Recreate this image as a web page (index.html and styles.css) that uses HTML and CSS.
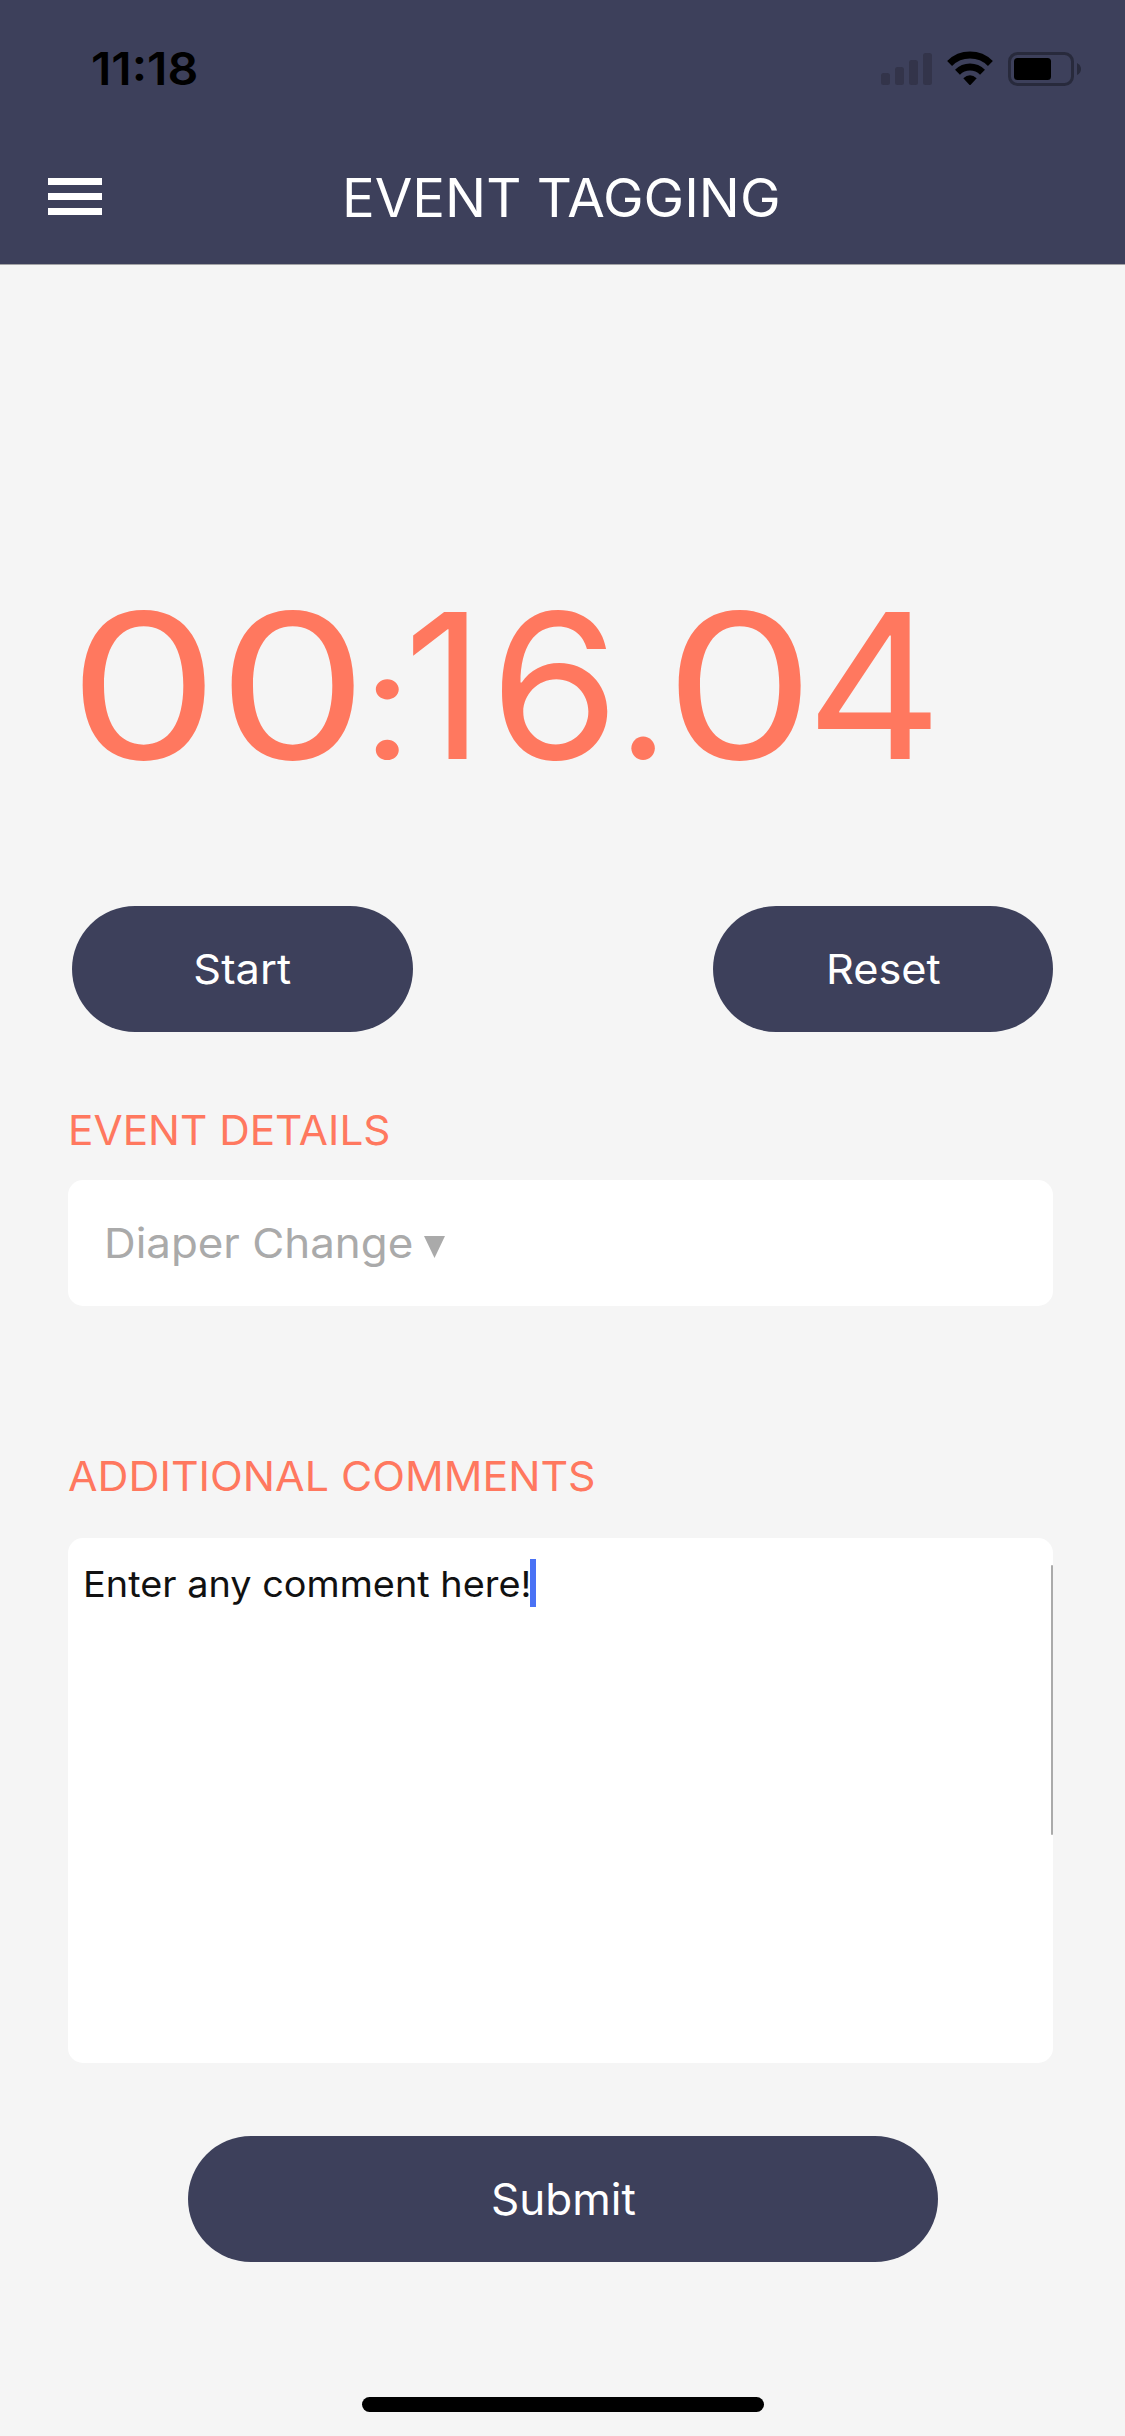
FILE: index.html
```html
<!DOCTYPE html>
<html lang="en">
<head>
<meta charset="utf-8">
<title>Event Tagging</title>
<link rel="stylesheet" href="styles.css">
</head>
<body>
<header class="header">
  <div class="status">
    <span class="clock">11:18</span>
    <svg class="status-icons" width="204" height="40" viewBox="0 0 204 40">
      <g fill="#33344a">
        <rect x="1" y="23" width="9" height="12" rx="2.5"/>
        <rect x="15" y="17" width="9" height="18" rx="2.5"/>
        <rect x="29" y="10" width="9" height="25" rx="2.5"/>
        <rect x="43" y="3" width="9" height="32" rx="2.5"/>
      </g>
      <g fill="none" stroke="#000" stroke-width="7">
        <path d="M69.600 13.500A29 29 0 0 1 110.400 13.500"/>
        <path d="M77.500 22.200A17.800 17.800 0 0 1 102.500 22.200"/>
      </g>
      <path d="M83.300 28.300Q90 22 96.700 28.300L90.700 34.700Q90 35.300 89.300 34.700Z"/>
      <rect x="129.500" y="3.500" width="63" height="31" rx="8" fill="none" stroke="#282a3c" stroke-width="3"/>
      <rect x="134" y="8" width="37" height="22" rx="3.500"/>
      <path d="M197 13Q201 15 201 19T197 25Z" fill="#282a3c"/>
    </svg>
  </div>
  <div class="navbar">
    <button class="menu" aria-label="Menu"><i></i><i></i><i></i></button>
    <h1 class="title">EVENT TAGGING</h1>
  </div>
</header>
<main class="content">
  <div class="timer"><span class="zero">0</span><span class="zero second">0</span><span class="colon">:</span><span class="one">1</span><span class="six">6</span><span class="dot">.</span><span class="zero last">0</span><span class="four">4</span></div>
  <div class="controls">
    <button class="pill"><span class="caption">Start</span></button>
    <button class="pill reset"><span class="caption">Reset</span></button>
  </div>
  <h2 class="label"><span class="details">EVENT DETAILS</span></h2>
  <div class="select">
    <span class="value">Diaper Change</span>
    <svg class="arrow" width="21" height="22" viewBox="0 0 21 22"><path d="M0 0H21L10.500 22Z" fill="#aaa"/></svg>
  </div>
  <h2 class="label label-comments"><span class="additional">ADDITIONAL COMMENTS</span></h2>
  <div class="comments">
    <span class="comment">Enter any comment here!</span><i class="caret"></i>
    <i class="scrollbar"></i>
  </div>
  <button class="pill submit">Submit</button>
  <div class="home"></div>
</main>
</body>
</html>
```
FILE: styles.css
```css
* { box-sizing: border-box; }
body {
  margin: 0;
  width: 1125px;
  height: 2436px;
  background: #f5f5f5;
  font-family: Inter, "Liberation Sans", sans-serif;
  overflow: hidden;
}
button { border: 0; padding: 0; background: none; font: inherit; color: inherit; }
h1, h2 { margin: 0; font-weight: 400; }
span { white-space: nowrap; display: inline-block; transform-origin: 0 50%; }

.header {
  height: 265px;
  background: #3d405b;
  border-bottom: 1px solid #a3a3a6;
}
.status {
  height: 132px;
  padding: 50px 41px 0 91px;
  display: flex;
  justify-content: space-between;
  align-items: flex-start;
}
.clock { font-size: 45px; line-height: 38px; font-weight: 600; transform: scaleX(1.07); }
.navbar {
  height: 132px;
  display: grid;
  grid-template-columns: 342px 1fr;
  align-items: center;
}
.menu {
  margin: 0 0 3px 48px;
  width: 54px;
  display: flex;
  flex-direction: column;
  gap: 8px;
}
.menu i { height: 7px; background: #fff; }
.title {
  color: #fff;
  font-size: 53px;
  line-height: 132px;
  transform: scaleX(1.028);
  transform-origin: 0 50%;
}

.content { padding: 0 72px 0 68px; display: flex; flex-direction: column; }
.timer {
  height: 641px;
  padding: 320px 0 0 12px;
  display: flex;
  color: #ff785f;
  font-size: 202px;
  line-height: 202px;
}
/* Every digit is stretched around its own centre, on a fixed advance. */
.zero { width: 149px; transform: scaleX(1.18); transform-origin: 63.5px 174px; }
.second { width: 129px; }
.last { width: 133px; }
.colon { width: 44px; transform: scale(.86, .76); transform-origin: 29.5px 174px; }
.one { width: 90px; transform: scaleX(.97); transform-origin: 64px 174px; }
.six { width: 122px; transform: scaleX(1.04); transform-origin: 62.5px 174px; }
.dot { width: 62px; transform: scale(.88); transform-origin: 28.5px 174px; }
.four { transform: scaleX(1.05); transform-origin: 65.5px 174px; }

.controls { display: flex; justify-content: space-between; margin-left: 4px; }
.pill {
  width: 341px;
  height: 126px;
  border-radius: 63px;
  background: #3d405b;
  color: #fff;
  font-size: 41px;
  line-height: 126px;
}
.reset { width: 340px; }
.caption { transform: scaleX(1.057); transform-origin: 50% 50%; }
.label {
  margin-top: 73px;
  height: 50px;
  color: #ff785f;
  font-size: 41px;
  line-height: 50px;
}
.details { transform: scaleX(1.032); }
.additional { transform: scaleX(1.045); }
.select {
  width: 985px;
  height: 126px;
  margin-top: 25px;
  padding-left: 36px;
  display: grid;
  grid-template-columns: 320px 21px;
  align-items: center;
  border-radius: 15px;
  background: #fff;
  color: #aaa;
  font-size: 41px;
}
.value { transform: scaleX(1.07); }
.arrow { margin-top: 8px; }
.label-comments { margin-top: 145px; }
.comments {
  position: relative;
  width: 985px;
  height: 525px;
  margin-top: 37px;
  padding: 21px 0 0 15px;
  display: grid;
  grid-template-columns: 447px 6px;
  align-items: start;
  border-radius: 15px;
  background: #fff;
  color: #111;
  font-size: 36px;
  line-height: 50px;
}
.comment { transform: scaleX(1.052); }
.caret { width: 6px; height: 48px; background: #4a72f5; z-index: 1; }
.scrollbar {
  position: absolute;
  top: 27px;
  right: 0;
  width: 2px;
  height: 270px;
  border-radius: 1px;
  background: #aaa;
}
.submit { width: 750px; margin: 73px 0 0 120px; padding-left: 1px; font-size: 44px; }
.home {
  width: 402px;
  height: 15px;
  margin: 135px 0 0 294px;
  border-radius: 8px;
  background: #000;
}
```
